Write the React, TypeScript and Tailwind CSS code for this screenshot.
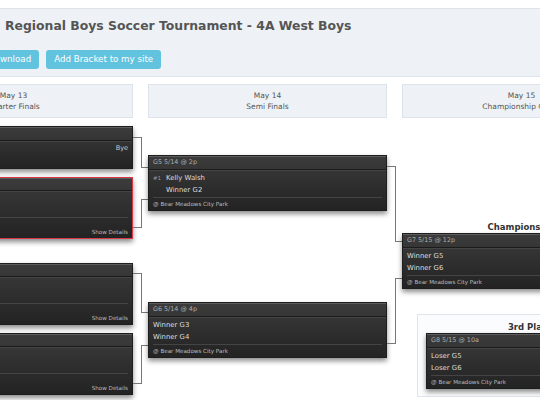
type Team = { seed?: string; name: string; right?: string };

interface GameProps {
  code: string;
  teams: Team[];
  place?: string;
  details?: boolean;
  red?: boolean;
  big?: boolean;
}

const Game = ({ code, teams, place, details, red, big }: GameProps) => {
  const hasSeed = teams.some((t) => t.seed);
  return (
    <div
      className={`w-[239px] border bg-linear-to-b from-[#3c3c3c] to-[#232323] shadow-[inset_0_1px_0_#5c5c5c,0_3px_5px_rgba(0,0,0,0.45)] ${
        red ? "border-[#d23a45]" : "border-[#1e1e1e]"
      }`}
    >
      <div
        className={`flex items-center px-[4px] text-[6.4px] text-[#aaa] border-b border-[#1b1b1b] shadow-[0_1px_0_#444] ${
          big ? "h-[14px]" : "h-[13px]"
        }`}
      >
        {code}
      </div>
      <div className={`px-[4px] ${big ? "pt-[2px] pb-[1px]" : "pt-[2px] pb-[2px]"}`}>
        {teams.map((t, i) => (
          <div key={i} className={`flex items-center text-[#ddd] ${big ? "h-[12px]" : "h-[11px]"}`}>
            {hasSeed && <span className="w-[13px] text-[5.4px] text-[#999]">{t.seed ? `#${t.seed}` : ""}</span>}
            <span className="text-[6.9px]">{t.name}</span>
            {t.right && <span className="ml-auto text-[6.5px] text-[#ccc]">{t.right}</span>}
          </div>
        ))}
      </div>
      {place && (
        <div className="mx-[4px] border-t border-[#444] text-[5.6px] text-[#bbb]">
          {details ? (
            <div className="h-[20px] flex flex-col justify-between pt-[2px] pb-[2px]">
              <span>@ {place}</span>
              <span className="self-end">Show Details</span>
            </div>
          ) : (
            <div className="h-[12px] flex items-center">@ {place}</div>
          )}
        </div>
      )}
    </div>
  );
};

const Round = ({ date, name }: { date: string; name: string }) => (
  <div className="h-[34px] bg-[#eef2f6] border border-[#dce3ea] flex flex-col items-center justify-center text-[7.5px] leading-[11.5px] text-[#555]">
    <span>{date}</span>
    <span>{name}</span>
  </div>
);

const Lines = ({ paths }: { paths: string[] }) => (
  <svg width="15" height="274" className="block">
    {paths.map((d) => (
      <path key={d} d={d} fill="none" stroke="#777" strokeWidth="1" shapeRendering="crispEdges" />
    ))}
  </svg>
);

const place = "Bear Meadows City Park";

export default function App() {
  return (
    <div className="w-[540px] h-[400px] overflow-hidden bg-white font-['DejaVu_Sans',Verdana,sans-serif] text-[#555]">
      <div className="pt-[8px]">
        <div className="h-[69px] bg-[#eef2f6] border-y border-[#dde4eb] pt-[9px]">
          <h1 className="pl-[5px] text-[12.4px] leading-[15px] font-bold text-[#555] whitespace-nowrap">
            Regional Boys Soccer Tournament - 4A West Boys
          </h1>
          <div className="mt-[17px] -ml-[20px] flex gap-[7px]">
            <button className="h-[19px] px-[8px] rounded-[3px] bg-[#62c3df] text-white text-[8.7px]">Download</button>
            <button className="h-[19px] px-[8px] rounded-[3px] bg-[#62c3df] text-white text-[8.7px]">
              Add Bracket to my site
            </button>
          </div>
        </div>
      </div>

      <div className="-ml-[106px] w-[760px] mt-[7px]">
        <div className="grid grid-cols-[239px_15px_239px_15px_239px]">
          <Round date="May 13" name="Quarter Finals" />
          <div />
          <Round date="May 14" name="Semi Finals" />
          <div />
          <Round date="May 15" name="Championship Game" />
        </div>

        <div className="mt-[8px] grid grid-cols-[239px_15px_239px_15px_239px] items-start">
          <div className="flex flex-col">
            <Game
              code="G1 5/13"
              teams={[{ seed: "1", name: "Kelly Walsh", right: "Bye" }, { name: "" }]}
              big
            />
            <div className="mt-[8px]">
              <Game code="G2 5/13" teams={[{ seed: "4", name: "Cheyenne" }, { seed: "5", name: "Laramie" }]} place="Park" details red />
            </div>
            <div className="mt-[24px]">
              <Game code="G3 5/13" teams={[{ seed: "2", name: "Natrona" }, { seed: "7", name: "Rock" }]} place="Park" details />
            </div>
            <div className="mt-[8px]">
              <Game code="G4 5/13" teams={[{ seed: "3", name: "Sheridan" }, { seed: "6", name: "Central" }]} place="Park" details />
            </div>
          </div>

          <Lines
            paths={["M0 11.5H8.5V41.5H15", "M0 101.5H8.5V73.5H15", "M0 147.5H8.5V186.5H15", "M0 257.5H8.5V219.5H15"]}
          />

          <div className="flex flex-col">
            <div className="mt-[29px]">
              <Game code="G5 5/14 @ 2p" teams={[{ seed: "1", name: "Kelly Walsh" }, { name: "Winner G2" }]} place={place} big />
            </div>
            <div className="mt-[91px]">
              <Game code="G6 5/14 @ 4p" teams={[{ name: "Winner G3" }, { name: "Winner G4" }]} place={place} big />
            </div>
          </div>

          <Lines paths={["M0 40.5H8.5V115.5H15", "M0 217.5H8.5V152.5H15"]} />

          <div className="flex flex-col">
            <div className="mt-[95px] h-[12px] flex items-center justify-center text-[8.5px] font-bold text-[#333]">
              Championship
            </div>
            <Game code="G7 5/15 @ 12p" teams={[{ name: "Winner G5" }, { name: "Winner G6" }]} place={place} big />
            <div className="mt-[25px] ml-[15px] w-[257px] border border-[#dfe5eb] bg-[#fbfcfd] px-[8px] pt-[6px] pb-[7px]">
              <div className="h-[12px] flex items-center justify-center text-[8.5px] font-bold text-[#333]">3rd Place Game</div>
              <Game code="G8 5/15 @ 10a" teams={[{ name: "Loser G5" }, { name: "Loser G6" }]} place={place} big />
            </div>
          </div>
        </div>
      </div>
    </div>
  );
}
